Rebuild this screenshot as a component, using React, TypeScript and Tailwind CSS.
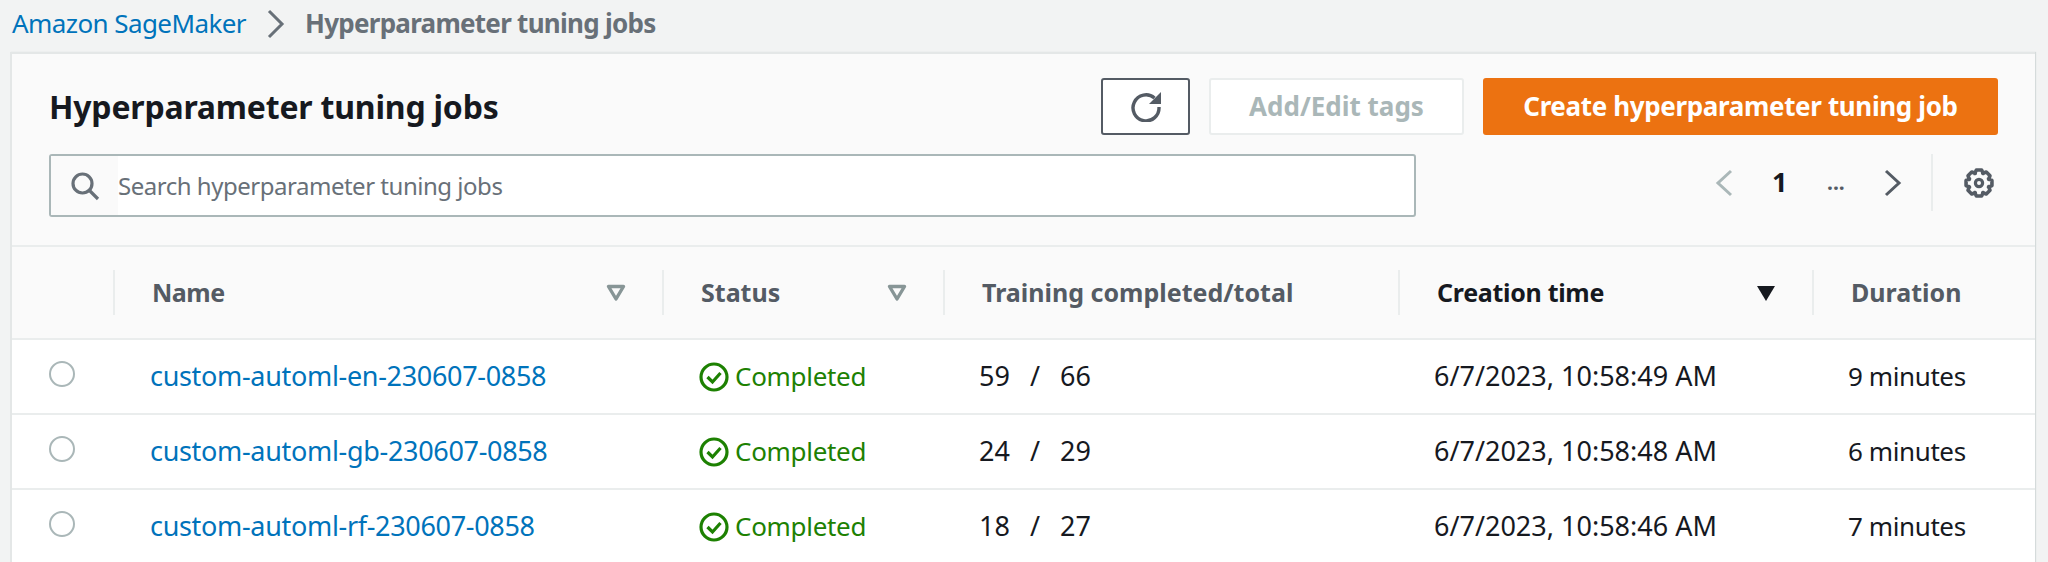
import { Fragment } from "react"

const rows = [
  { name: "custom-automl-en-230607-0858", done: 59, total: 66, created: "6/7/2023, 10:58:49 AM", duration: "9 minutes" },
  { name: "custom-automl-gb-230607-0858", done: 24, total: 29, created: "6/7/2023, 10:58:48 AM", duration: "6 minutes" },
  { name: "custom-automl-rf-230607-0858", done: 18, total: 27, created: "6/7/2023, 10:58:46 AM", duration: "7 minutes" },
]

function RefreshIcon() {
  return (
    <svg width="30" height="30" viewBox="0 0 30 30" fill="none">
      <path d="M23.5 6A13 13 0 1 0 28 15" stroke="#545b64" strokeWidth="3.4" />
      <path d="M30 0v12H18z" fill="#545b64" />
    </svg>
  )
}

// 8 teeth, worked out once instead of typing 32 points by hand
const gearPath =
  Array.from({ length: 8 }, (_, i) => {
    const mid = (i * Math.PI) / 4 - Math.PI / 2
    const pts = [
      [10.4, mid - 0.42],
      [13.2, mid - 0.2],
      [13.2, mid + 0.2],
      [10.4, mid + 0.42],
    ]
    return pts.map(([r, a]) => `${(15 + r * Math.cos(a)).toFixed(2)} ${(15 + r * Math.sin(a)).toFixed(2)}`).join("L")
  })
    .join("L")
    .replace(/^/, "M") + "z"

function GearIcon() {
  return (
    <svg width="30" height="30" viewBox="0 0 30 30" fill="none" stroke="#545b64" strokeWidth="3.6" strokeLinejoin="round">
      <circle cx="15" cy="15" r="3.6" strokeWidth="3.2" />
      <path d={gearPath} />
    </svg>
  )
}

function Chevron({ dir, color }: { dir: "left" | "right"; color: string }) {
  return (
    <svg width="18" height="28" viewBox="0 0 18 28" fill="none" stroke={color} strokeWidth="3">
      <path d={dir === "left" ? "M16 2L3 14l13 12" : "M2 2l13 12L2 26"} />
    </svg>
  )
}

function FilterCaret() {
  return (
    <svg width="20" height="18" viewBox="0 0 20 18" fill="none" stroke="#879596" strokeWidth="3.4" strokeLinejoin="round">
      <path d="M2.5 2.5h15L10 15z" />
    </svg>
  )
}

function CheckCircle() {
  return (
    <svg width="30" height="30" viewBox="0 0 30 30" fill="none" stroke="#1d8102" strokeWidth="3.2">
      <circle cx="15" cy="15" r="13" />
      <path d="M8.5 15l5 5 8-9" />
    </svg>
  )
}

const headCell = "flex h-[45px] items-center justify-between border-l-2 border-[#eaeded] pl-[37px] pr-[36px] text-[25px] font-bold text-[#545b64]"

export default function App() {
  return (
    <div className="h-[562px] overflow-hidden bg-[#f2f3f3] font-['Noto_Sans',sans-serif] text-[#16191f]">
      <nav className="flex h-[52px] items-center pb-[5px] pl-[12px] text-[26px]">
        <span className="tracking-[-0.58px] text-[#0073bb]">Amazon SageMaker</span>
        <svg className="ml-[21px] mr-[20px]" width="18" height="30" viewBox="0 0 18 30" fill="none" stroke="#687078" strokeWidth="3">
          <path d="M2 2l13 13L2 28" />
        </svg>
        <span className="font-bold tracking-[-0.73px] text-[#687078]">Hyperparameter tuning jobs</span>
      </nav>

      <div className="ml-[10px] mr-[13px] h-[510px] border-l-2 border-t-2 border-[#e4e7e7] bg-white shadow-[1px_0_1px_#d5dbdb]">
        <div className="border-b-2 border-[#eaeded] bg-[#fafafa] pb-[28px] pl-[37px] pr-[37px] pt-[24px]">
          <div className="flex items-center justify-between">
            <h1 className="text-[32px] font-bold tracking-[-0.2px]">Hyperparameter tuning jobs</h1>
            <div className="flex gap-[19px]">
              <button className="flex h-[57px] w-[89px] items-center justify-center rounded-[3px] border-2 border-[#545b64] bg-white">
                <RefreshIcon />
              </button>
              <button className="h-[57px] w-[255px] rounded-[3px] border-2 border-[#eaeded] bg-white text-[26px] font-bold text-[#aab7b8]">
                Add/Edit tags
              </button>
              <button className="h-[57px] w-[515px] rounded-[3px] bg-[#ec7211] text-[26px] font-bold tracking-[-0.36px] text-white">
                Create hyperparameter tuning job
              </button>
            </div>
          </div>
          <div className="mt-[19px] flex items-start justify-between">
            <div className="flex h-[63px] w-[1367px] items-center rounded-[3px] border-2 border-[#aab7b8] bg-white">
              <div className="flex h-full w-[67px] items-center justify-center bg-[#fafafa]">
                <svg width="30" height="30" viewBox="0 0 30 30" fill="none" stroke="#687078" strokeWidth="3.2">
                  <circle cx="12.5" cy="12.5" r="9.5" />
                  <path d="M19.5 19.5L28 28" />
                </svg>
              </div>
              <span className="text-[24px] tracking-[-0.48px] text-[#687078]">Search hyperparameter tuning jobs</span>
            </div>
            <div className="flex h-[57px] items-center pr-[4px]">
              <Chevron dir="left" color="#aab7b8" />
              <span className="ml-[39px] w-[13px] text-[27px] font-bold">1</span>
              <span className="ml-[42px] w-[18px] text-[21px] font-bold leading-none text-[#545b64]">...</span>
              <span className="ml-[39px]"><Chevron dir="right" color="#545b64" /></span>
              <div className="ml-[29px] mr-[31px] h-full border-l-2 border-[#eaeded]" />
              <GearIcon />
            </div>
          </div>
        </div>

        <div className="grid grid-cols-[101px_549px_281px_455px_414px_1fr]">
          <div className="col-span-6 grid grid-cols-subgrid items-center border-b-2 border-[#eaeded] bg-[#fafafa] pb-[23px] pt-[23px]">
            <div />
            <div className={headCell}><span className="tracking-[-0.5px]">Name</span> <FilterCaret /></div>
            <div className={headCell}>Status <FilterCaret /></div>
            <div className={headCell}>Training completed/total</div>
            <div className={`${headCell} text-[#16191f]`}>
              <span className="tracking-[-0.3px]">Creation time</span>
              <svg width="20" height="16" viewBox="0 0 20 16" fill="#16191f"><path d="M1 1h18l-9 15z" /></svg>
            </div>
            <div className={headCell}>Duration</div>
          </div>

          {rows.map((row) => (
            <Fragment key={row.name}>
              <div className="col-span-6 grid h-[75px] grid-cols-subgrid items-center border-b-2 border-[#eaeded]">
                <div className="pb-[6px] pl-[37px]">
                  <div className="h-[26px] w-[26px] rounded-full border-2 border-[#aab7b8] bg-white" />
                </div>
                <div className="pl-[37px] text-[27px] tracking-[-0.32px] text-[#0073bb]">{row.name}</div>
                <div className="flex items-center gap-[6px] pl-[37px] text-[26px] tracking-[-0.3px] text-[#1d8102]">
                  <CheckCircle />
                  Completed
                </div>
                <div className="whitespace-pre pl-[36px] text-[27px] [word-spacing:3px]">{row.done}  /  {row.total}</div>
                <div className="pl-[36px] text-[27px]">{row.created}</div>
                <div className="pl-[36px] text-[26px] tracking-[-0.4px]">{row.duration}</div>
              </div>
            </Fragment>
          ))}
        </div>
      </div>
    </div>
  )
}
